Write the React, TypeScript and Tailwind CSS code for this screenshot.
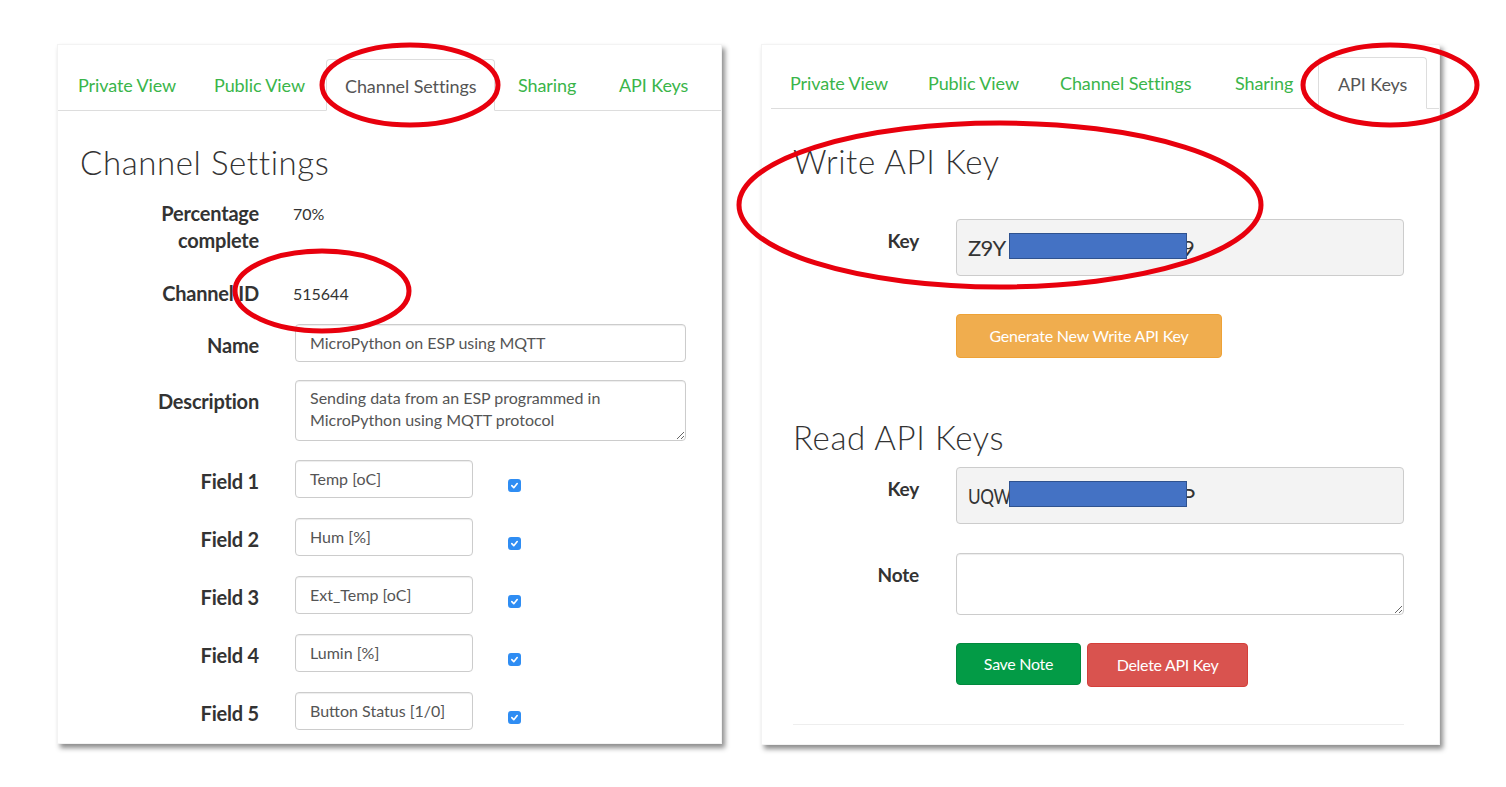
import React from "react";

const TAB_NAMES = ["Private View", "Public View", "Channel Settings", "Sharing", "API Keys"];

function Tabs({ widths, active, inset }: { widths: string[]; active: string; inset: boolean }) {
  return (
    <div
      className={`flex items-end border-b border-[#ddd] ${
        inset ? "ml-[9px] h-[64px]" : "h-[66px] pl-[2px]"
      }`}
    >
      {TAB_NAMES.map((t, i) => {
        const isActive = t === active;
        return (
          <div key={t} className={`${widths[i]} flex shrink-0`}>
            <div
              className={`flex h-[51px] items-center whitespace-nowrap pt-[2px] text-[18px] tracking-[-0.1px] ${
                inset ? "px-[19px]" : "px-[18px]"
              } ${
                isActive
                  ? "-mb-px h-[52px] rounded-t-[4px] border border-b-white border-[#ddd] bg-white text-[#555]"
                  : "text-[#3ab54a]"
              }`}
            >
              {t}
            </div>
          </div>
        );
      })}
    </div>
  );
}

function Checkbox() {
  return (
    <div className="flex h-[13px] w-[13px] items-center justify-center rounded-[3px] bg-[#2f8df3]">
      <svg width="9" height="9" viewBox="0 0 10 10">
        <path d="M2 5.2 L4.2 7.4 L8 2.8" fill="none" stroke="white" strokeWidth="1.8" strokeLinecap="round" strokeLinejoin="round" />
      </svg>
    </div>
  );
}

const inputCls =
  "rounded-[4px] border border-[#ccc] bg-white px-[14px] text-[16px] text-[#555] shadow-[inset_0_1px_1px_rgba(0,0,0,0.075)]";

function Label({ children, w, size = "text-[20px]", pt = "pt-[8px]" }: { children: React.ReactNode; w: string; size?: string; pt?: string }) {
  return (
    <div className={`${w} ${pt} ${size} shrink-0 text-right font-bold leading-[27px] tracking-[-0.2px] text-[#333]`}>
      {children}
    </div>
  );
}

const headingCls = "text-[33px] font-light leading-[36px] tracking-[0.6px] text-[#333]";

function ChannelSettingsPanel() {
  const fields = ["Temp [oC]", "Hum [%]", "Ext_Temp [oC]", "Lumin [%]", "Button Status [1/0]"];
  return (
    <div className="h-[700px] w-[665px] shrink-0 border border-[#f3f3f3] bg-white shadow-[3px_4px_5px_rgba(0,0,0,0.45)]">
      <Tabs widths={["w-[136px]", "w-[130px]", "w-[174px]", "w-[101px]", "w-[110px]"]} active="Channel Settings" inset={false} />
      <div className="px-[22px]">
        <h2 className={`mt-[33px] ${headingCls}`}>Channel Settings</h2>

        <div className="mt-[20px] flex">
          <Label w="w-[179px]" pt="pt-0">
            Percentage
            <br />
            complete
          </Label>
          <div className="ml-[34px] text-[16px] leading-[27px] text-[#333]">70%</div>
        </div>

        <div className="mt-[26px] flex">
          <Label w="w-[179px]" pt="pt-0">Channel ID</Label>
          <div className="ml-[34px] text-[16px] leading-[27px] text-[#333]">515644</div>
        </div>

        <div className="mt-[17px] flex">
          <Label w="w-[179px]">Name</Label>
          <div className={`ml-[36px] flex h-[38px] w-[391px] items-center ${inputCls}`}>MicroPython on ESP using MQTT</div>
        </div>

        <div className="mt-[18px] flex">
          <Label w="w-[179px]">Description</Label>
          <textarea
            readOnly
            value={"Sending data from an ESP programmed in MicroPython using MQTT protocol"}
            className={`ml-[36px] h-[61px] w-[391px] resize-y py-[6px] leading-[22px] outline-none ${inputCls}`}
          />
        </div>

        {fields.map((f, i) => (
          <div key={f} className={`flex ${i === 0 ? "mt-[19px]" : "mt-[20px]"}`}>
            <Label w="w-[179px]">Field {i + 1}</Label>
            <div className={`ml-[36px] flex h-[38px] w-[178px] items-center ${inputCls}`}>{f}</div>
            <div className="ml-[35px] mt-[19px]">
              <Checkbox />
            </div>
          </div>
        ))}
      </div>
    </div>
  );
}

function KeyBox({ prefix, tail, prefixCls }: { prefix: string; tail: string; prefixCls: string }) {
  return (
    <div className="relative ml-[37px] flex h-[57px] w-[448px] items-center rounded-[4px] border border-[#ccc] bg-[#f3f3f3] pl-[11px] text-[22px] text-[#333]">
      <span className={`inline-block origin-left ${prefixCls}`}>{prefix}</span>
      <span className="absolute left-[225px]">{tail}</span>
      {/* redaction block laid over the key text */}
      <span className="absolute left-[52px] top-[13px] h-[26px] w-[178px] border border-[#2f528f] bg-[#4472c4]" />
    </div>
  );
}

function ApiKeysPanel() {
  return (
    <div className="h-[701px] w-[679px] shrink-0 border border-[#f3f3f3] bg-white shadow-[3px_4px_5px_rgba(0,0,0,0.45)]">
      <Tabs widths={["w-[138px]", "w-[132px]", "w-[175px]", "w-[102px]", "w-[105px]"]} active="API Keys" inset />
      <div className="pl-[31px]">
        <h2 className={`mt-[34px] ${headingCls}`}>Write API Key</h2>

        <div className="mt-[40px] flex">
          <Label w="w-[126px]" size="text-[19px]">Key</Label>
          <KeyBox prefix="Z9Y" tail="9" prefixCls="tracking-[-0.8px]" />
        </div>

        <button className="ml-[163px] mt-[38px] h-[44px] w-[266px] rounded-[4px] border border-[#eea236] bg-[#f0ad4e] text-[16px] tracking-[-0.2px] text-white">
          Generate New Write API Key
        </button>

        <h2 className={`mt-[61px] ${headingCls}`}>Read API Keys</h2>

        <div className="mt-[12px] flex">
          <Label w="w-[126px]" size="text-[19px]">Key</Label>
          <KeyBox prefix="UQW" tail="P" prefixCls="scale-x-[0.78] tracking-[-0.5px]" />
        </div>

        <div className="mt-[29px] flex">
          <Label w="w-[126px]" size="text-[19px]">Note</Label>
          <textarea
            readOnly
            value=""
            className={`ml-[37px] h-[62px] w-[448px] resize-y outline-none ${inputCls}`}
          />
        </div>

        <div className="ml-[163px] mt-[28px] flex items-start gap-[6px]">
          <button className="h-[42px] w-[125px] rounded-[4px] border border-[#02893e] bg-[#039b46] text-[16px] tracking-[-0.3px] text-white">
            Save Note
          </button>
          <button className="h-[44px] w-[161px] rounded-[4px] border border-[#d43f3a] bg-[#d9534f] text-[16px] tracking-[-0.3px] text-white">
            Delete API Key
          </button>
        </div>

        <div className="mt-[37px] w-[611px] border-t border-[#eee]" />
      </div>
    </div>
  );
}

export default function App() {
  return (
    <div className="relative h-[787px] w-[1506px] overflow-hidden bg-white font-['Lato',sans-serif]">
      <div className="flex gap-[39px] pl-[57px] pt-[44px]">
        <ChannelSettingsPanel />
        <ApiKeysPanel />
      </div>

      {/* red annotation rings drawn over the screenshots */}
      <svg className="pointer-events-none absolute left-0 top-0" width="1506" height="787">
        <g fill="none" stroke="#e8000d" strokeWidth="5">
          <ellipse cx="410" cy="85" rx="88" ry="40" />
          <ellipse cx="322" cy="291" rx="87" ry="40" />
          <ellipse cx="1390" cy="85" rx="87" ry="40" />
          <ellipse cx="1000" cy="205" rx="261" ry="82" />
        </g>
      </svg>
    </div>
  );
}
